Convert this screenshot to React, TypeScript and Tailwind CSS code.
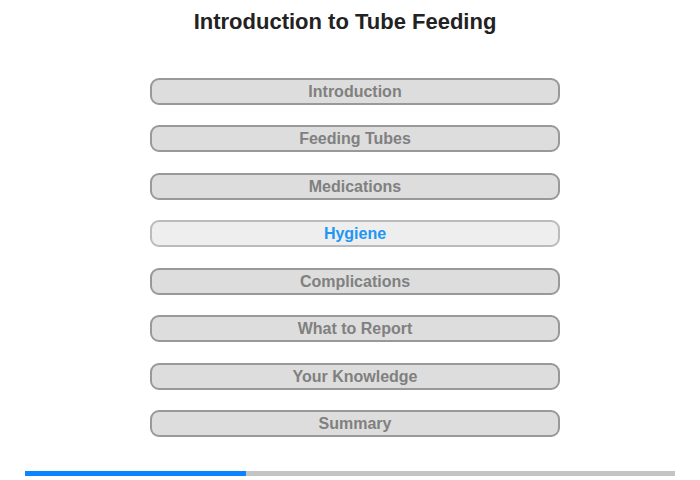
const sections = [
  "Introduction",
  "Feeding Tubes",
  "Medications",
  "Hygiene",
  "Complications",
  "What to Report",
  "Your Knowledge",
  "Summary",
];

const active = "Hygiene";

export default function App() {
  return (
    <div className="relative h-[480px] w-[700px] bg-white font-['Liberation_Sans',Arial,sans-serif]">
      <h1 className="pt-[9px] pr-[10px] text-center text-[22px] leading-[26px] font-bold text-[#222]">
        Introduction to Tube Feeding
      </h1>

      <div className="mt-[43px] flex flex-col items-center gap-[20.43px] pl-[10px]">
        {sections.map((name) => {
          const isActive = name === active;
          return (
            <button
              key={name}
              className={
                isActive
                  ? "h-[27px] w-[410px] rounded-[9px] border-2 border-[#bbbbbb] bg-[#eeeeee] text-[16px] leading-[23px] font-bold text-[#2196f3]"
                  : "h-[27px] w-[410px] rounded-[9px] border-2 border-[#999999] bg-[#dddddd] text-[16px] leading-[23px] font-bold text-[#808080]"
              }
            >
              {name}
            </button>
          );
        })}
      </div>

      <div className="mx-[25px] mt-[34px] flex h-[5px] bg-[#c4c4c4]">
        <div className="h-full w-[221px] bg-[#0a84ff]" />
      </div>
    </div>
  );
}
